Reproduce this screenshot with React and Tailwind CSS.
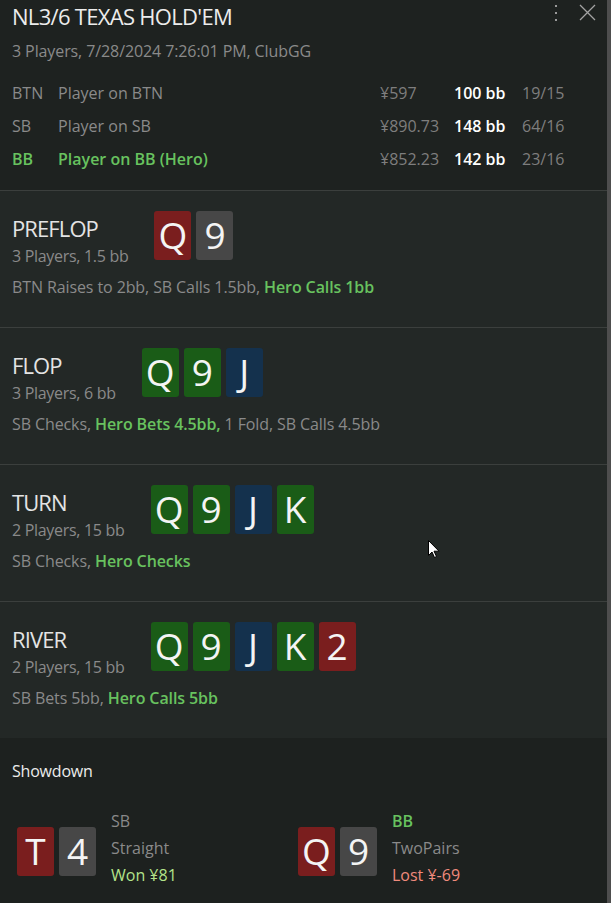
import React from "react";

const CARD_BG = {
  r: "bg-[#7a1e1e]",
  g: "bg-[#1a5c17]",
  b: "bg-[#14314d]",
  k: "bg-[#474747]",
};

function Card({ v, c }) {
  return (
    <div
      className={`${CARD_BG[c]} w-[37px] h-[49px] rounded-[3px] flex items-center justify-center text-[#f4f4f4] text-[37px] leading-none`}
    >
      <span className="-mt-[2px]">{v}</span>
    </div>
  );
}

function Street({ title, sub, cards, children }) {
  return (
    <div className="bg-[#232826] border-b border-[#3b3f3d] h-[137px] px-3 pt-[20px]">
      <div className="flex items-start gap-[26px]">
        <div className="pt-[4px]">
          <div className="text-[22px] leading-[26px] text-[#e4e4e4] tracking-[-0.9px]">{title}</div>
          <div className="mt-[4px] text-[16px] leading-[23px] text-[#8a8a8a] tracking-[-0.3px]">{sub}</div>
        </div>
        <div className="flex gap-[5px]">
          {cards.map(([v, c], i) => (
            <Card key={i} v={v} c={c} />
          ))}
        </div>
      </div>
      <div className="mt-[8px] text-[16px] leading-[23px] text-[#8a8a8a] tracking-[-0.1px]">{children}</div>
    </div>
  );
}

const Hero = ({ children }) => <span className="text-[#68c25f] font-semibold">{children}</span>;

export default function App() {
  const rows = [
    ["BTN", "Player on BTN", "¥597", "100 bb", "19/15", false],
    ["SB", "Player on SB", "¥890.73", "148 bb", "64/16", false],
    ["BB", "Player on BB (Hero)", "¥852.23", "142 bb", "23/16", true],
  ];
  return (
    <div
      className="relative flex w-[611px] h-[903px] overflow-hidden bg-[#1e2220]"
      style={{ fontFamily: '"Open Sans", "Noto Sans", sans-serif' }}
    >
      <div className="flex-1 flex flex-col min-w-0">
        {/* Header */}
        <div className="bg-[#1e2220] border-b border-[#3b3f3d] h-[191px] px-3 pt-[2px]">
          <div className="flex items-start justify-between">
            <div className="text-[22px] leading-[28px] text-[#ececec] tracking-[-0.7px]">NL3/6 TEXAS HOLD'EM</div>
            <div className="flex items-start gap-[22px] pr-[11px] -mr-3">
              <div className="flex flex-col gap-[5px] pt-[3px]">
                <span className="w-[2px] h-[2px] bg-[#9a9a9a] block" />
                <span className="w-[2px] h-[2px] bg-[#9a9a9a] block" />
                <span className="w-[2px] h-[2px] bg-[#9a9a9a] block" />
              </div>
              <svg width="17" height="17" viewBox="0 0 17 17" className="mt-[2px]">
                <path d="M1 1L16 16M16 1L1 16" stroke="#a3a3a3" strokeWidth="1.3" />
              </svg>
            </div>
          </div>
          <div className="mt-[10px] text-[16px] leading-[22px] text-[#8a8a8a] tracking-[-0.1px]">
            3 Players, 7/28/2024 7:26:01 PM, ClubGG
          </div>
          <div className="mt-[15px]">
            {rows.map(([pos, name, stack, bb, st, hero]) => (
              <div
                key={pos}
                className="grid grid-cols-[46px_322px_74px_68px_1fr] text-[16px] leading-[33px] tracking-[0px]"
              >
                <span className={hero ? "text-[#68c25f] font-semibold" : "text-[#8a8a8a]"}>{pos}</span>
                <span className={hero ? "text-[#68c25f] font-semibold" : "text-[#8a8a8a]"}>{name}</span>
                <span className="text-[#7e7e7e]">{stack}</span>
                <span className="text-white font-semibold">{bb}</span>
                <span className="text-[#7e7e7e]">{st}</span>
              </div>
            ))}
          </div>
        </div>

        <Street title="PREFLOP" sub="3 Players, 1.5 bb" cards={[["Q", "r"], ["9", "k"]]}>
          BTN Raises to 2bb, SB Calls 1.5bb, <Hero>Hero Calls 1bb</Hero>
        </Street>
        <Street title="FLOP" sub="3 Players, 6 bb" cards={[["Q", "g"], ["9", "g"], ["J", "b"]]}>
          SB Checks, <Hero>Hero Bets 4.5bb,</Hero> 1 Fold, SB Calls 4.5bb
        </Street>
        <Street title="TURN" sub="2 Players, 15 bb" cards={[["Q", "g"], ["9", "g"], ["J", "b"], ["K", "g"]]}>
          SB Checks, <Hero>Hero Checks</Hero>
        </Street>
        <Street
          title="RIVER"
          sub="2 Players, 15 bb"
          cards={[["Q", "g"], ["9", "g"], ["J", "b"], ["K", "g"], ["2", "r"]]}
        >
          SB Bets 5bb, <Hero>Hero Calls 5bb</Hero>
        </Street>

        {/* Showdown */}
        <div className="flex-1 bg-[#1d211f] -mt-px pt-[22px]">
          <div className="px-3 text-[16px] leading-[22px] text-[#ececec] tracking-[-0.2px]">Showdown</div>
          <div className="mt-[26px] pl-[17px] grid grid-cols-[281px_281px]">
            <div className="flex items-center">
              <div className="flex gap-[5px] mt-[5px]">
                <Card v="T" c="r" />
                <Card v="4" c="k" />
              </div>
              <div className="ml-[15px] text-[16px] leading-[27px] tracking-[0px]">
                <div className="text-[#8a8a8a]">SB</div>
                <div className="text-[#8a8a8a]">Straight</div>
                <div className="text-[#b3e38a]">Won ¥81</div>
              </div>
            </div>
            <div className="flex items-center">
              <div className="flex gap-[5px] mt-[5px]">
                <Card v="Q" c="r" />
                <Card v="9" c="k" />
              </div>
              <div className="ml-[15px] text-[16px] leading-[27px] tracking-[0px]">
                <div className="text-[#68c25f] font-semibold">BB</div>
                <div className="text-[#8a8a8a]">TwoPairs</div>
                <div className="text-[#ef8a7c]">Lost ¥-69</div>
              </div>
            </div>
          </div>
        </div>
      </div>
      <div className="w-[4px] bg-[#4e4e4e]" />

      {/* mouse cursor */}
      <svg width="12" height="19" viewBox="0 0 12 19" className="absolute left-[428px] top-[540px]">
        <path d="M0.5 0.5V15.5L4 12L6.5 17.5L8.5 16.5L6 11.2H11L0.5 0.5Z" fill="#ffffff" stroke="#000000" strokeWidth="1" />
      </svg>
    </div>
  );
}
